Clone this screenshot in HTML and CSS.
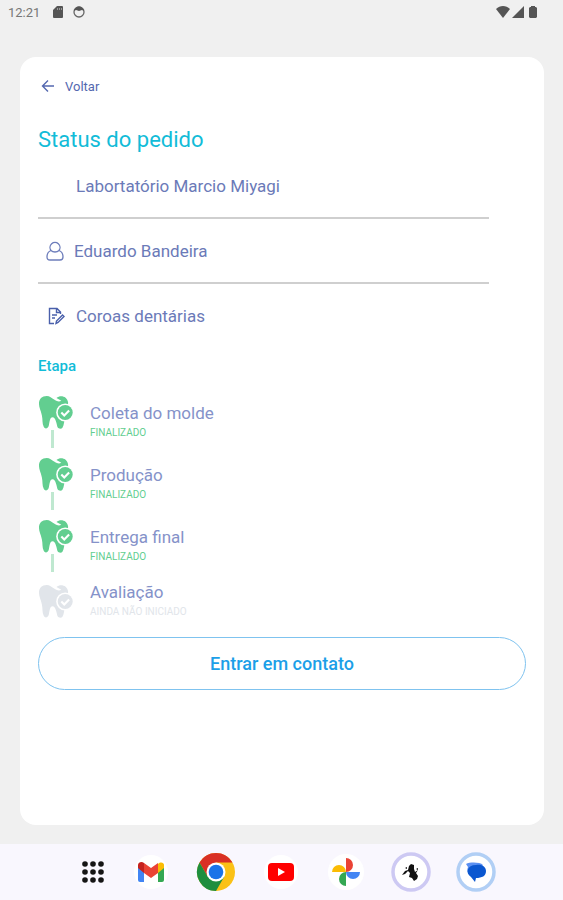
FILE: index.html
```html
<!DOCTYPE html>
<html lang="pt-BR">
  <head>
    <meta charset="UTF-8" />
    <meta name="viewport" content="width=device-width, initial-scale=1.0" />
    <title>Status do pedido</title>
    <link rel="stylesheet" href="styles.css">
  </head>

  <body>
    <!-- Shared tooth icon -->
    <svg class="sprite" aria-hidden="true">
      <symbol id="tooth" viewBox="0 0 36 36">
        <path fill="currentColor" d="M1 9C1 4 4 1 9 1c3 0 5 2 8 4 3 2 5 2 7 1l-5-3c4-3 11-2 12 5 0 4-2 8-3 13-1 5-1 10-3 13-1 1-4 1-5-1-1-4-2-10-5-10s-3 5-4 9c-1 3-4 3-5 1-2-4-1-8-2-12C3 16 1 13 1 9z" />
        <circle cx="28" cy="18" r="9.300" fill="#fff" />
        <circle cx="28" cy="18" r="7.700" fill="currentColor" />
        <path fill="none" stroke="#fff" stroke-width="2.200" d="M24 18l3 3 5-5" />
      </symbol>
    </svg>

    <!-- Status bar -->
    <header class="status-bar">
      <span class="clock">12:21</span>
      <svg class="sd-icon" viewBox="0 0 10 12"><path fill="#555" d="M4 0h5a1 1 0 0 1 1 1v10a1 1 0 0 1-1 1H1a1 1 0 0 1-1-1V4z" /><path stroke="#999" d="M4.500 2v2M6.500 2v2M8.500 2v2" /></svg>
      <svg class="round-icon" viewBox="0 0 12 12"><circle cx="6" cy="6" r="5" fill="none" stroke="#666" stroke-width="1.300" /><path fill="#555" d="M1 5c1-6 9-6 10 0L9 4 6 5 3 4z" /></svg>
      <div class="signals">
        <svg width="14" height="12" viewBox="0 0 14 12"><path fill="#555" d="M0 3c4-4 10-4 14 0L7 12z" /></svg>
        <svg width="12" height="12" viewBox="0 0 12 12"><path fill="#555" d="M12 0v12H0z" /></svg>
        <svg class="battery" width="8" height="12" viewBox="0 0 8 12"><path fill="#555" d="M2 0h4v1h1l1 1v9l-1 1H1l-1-1V2l1-1h1z" /></svg>
      </div>
    </header>

    <main class="screen">
      <section class="card">
        <a class="back" href="#">
          <svg width="14" height="14" viewBox="0 0 14 14" fill="none" stroke="#5468b0" stroke-width="1.400"><path d="M13 7H1.500M7 1.500L1.500 7 7 12.500" /></svg>
          Voltar
        </a>

        <h1 class="title">Status do pedido</h1>

        <div class="info">
          <div class="info-row">
            <span class="info-empty"></span>
            <span>Labortatório Marcio Miyagi</span>
          </div>
          <div class="info-row">
            <svg width="18" height="20" viewBox="0 0 18 20" fill="none" stroke="#6d7dbb" stroke-width="1.300"><path d="M5 9.500a5 5 0 1 1 8 0c3 1 4 3 4 6.500 0 2-1 3-3 3H4c-2 0-3-1-3-3 0-3.500 1-5.500 4-6.500zm0 0c2 2 6 2 8 0" /></svg>
            <span>Eduardo Bandeira</span>
          </div>
          <div class="info-row">
            <svg width="20" height="18" viewBox="0 0 20 18" fill="none" stroke="#4a60ab" stroke-width="1.400"><path d="M8 16.500H3.500v-15H11L14.500 5v2M10.500 1.500V5.500h4M6 8h5M6 11h3" /><path d="M10 16.500l.5-2.500 6-6 1.500 1.500-6 6z" /></svg>
            <span>Coroas dentárias</span>
          </div>
        </div>

        <h2 class="subtitle">Etapa</h2>

        <ol class="steps">
          <li class="step">
            <div class="step-mark"><svg class="tooth"><use href="#tooth" /></svg></div>
            <div class="step-text">
              <span class="step-name">Coleta do molde</span>
              <span class="step-status">FINALIZADO</span>
            </div>
          </li>
          <li class="step">
            <div class="step-mark"><svg class="tooth"><use href="#tooth" /></svg></div>
            <div class="step-text">
              <span class="step-name">Produção</span>
              <span class="step-status">FINALIZADO</span>
            </div>
          </li>
          <li class="step">
            <div class="step-mark"><svg class="tooth"><use href="#tooth" /></svg></div>
            <div class="step-text">
              <span class="step-name">Entrega final</span>
              <span class="step-status">FINALIZADO</span>
            </div>
          </li>
          <li class="step pending">
            <div class="step-mark"><svg class="tooth"><use href="#tooth" /></svg></div>
            <div class="step-text">
              <span class="step-name">Avaliação</span>
              <span class="step-status">AINDA NÃO INICIADO</span>
            </div>
          </li>
        </ol>

        <button class="contact" type="button">Entrar em contato</button>
      </section>
    </main>

    <!-- App dock -->
    <nav class="dock">
      <button class="app apps" type="button" aria-label="Apps">
        <svg width="24" height="24" viewBox="0 0 24 24" fill="#151515"><circle cx="4" cy="4" r="2.800" /><circle cx="12" cy="4" r="2.800" /><circle cx="20" cy="4" r="2.800" /><circle cx="4" cy="12" r="2.800" /><circle cx="12" cy="12" r="2.800" /><circle cx="20" cy="12" r="2.800" /><circle cx="4" cy="20" r="2.800" /><circle cx="12" cy="20" r="2.800" /><circle cx="20" cy="20" r="2.800" /></svg>
      </button>
      <button class="app" type="button" aria-label="Gmail">
        <svg viewBox="0 0 38 38"><circle cx="19" cy="19" r="17" fill="#fff" /><path fill="#4285f4" d="M6 13l6 4v12H8a2 2 0 0 1-2-2z" /><path fill="#34a853" d="M32 13l-6 4v12h4a2 2 0 0 0 2-2z" /><path fill="#fbbc04" d="M26 11c3-3 6-1 6 1v3l-6 5z" /><path fill="#c5221f" d="M6 15v-3c0-3 4-4 6-2v10z" /><path fill="#ea4335" d="M12 10l7 5 7-5v10l-7 5-7-5z" /></svg>
      </button>
      <button class="app" type="button" aria-label="Chrome">
        <svg viewBox="0 0 38 38"><circle cx="19" cy="19" r="19" fill="#fbc116" /><path fill="#d93025" d="M2.500 9.500A19 19 0 0 1 35.500 9.500H19L10.800 23.700z" /><path fill="#1e8e3e" d="M2.500 9.500A19 19 0 0 0 19 38l8.200-14.300H10.800z" /><circle cx="19" cy="19" r="9.500" fill="#fff" /><circle cx="19" cy="19" r="7.300" fill="#1a73e8" /></svg>
      </button>
      <button class="app" type="button" aria-label="YouTube">
        <svg viewBox="0 0 38 38"><circle cx="19" cy="19" r="17" fill="#fff" /><rect x="6" y="10" width="26" height="18" rx="4" fill="#f00" /><path fill="#fff" d="M16 15v8l7-4z" /></svg>
      </button>
      <button class="app" type="button" aria-label="Fotos">
        <svg viewBox="0 0 38 38"><circle cx="19" cy="19" r="18" fill="#fff" /><path fill="#ea4335" d="M19 5a7 7 0 0 1 0 14z" /><path fill="#4285f4" d="M33 19a7 7 0 0 1-14 0z" /><path fill="#34a853" d="M19 33a7 7 0 0 1 0-14z" /><path fill="#fbbc04" d="M5 19a7 7 0 0 1 14 0z" /></svg>
      </button>
      <button class="app" type="button" aria-label="App">
        <svg viewBox="0 0 38 38"><circle cx="19" cy="19" r="18" fill="#fff" stroke="#cdc9f3" stroke-width="3.500" /><path fill="#111" d="M17 13l2-2 3 1v4l1 3 3-2-2 3 2 3-1 3-3 2-2-3-3-1 1-4-2-2-3 3-3 1 3-4 3-1zM13 15l2-1v2zM24 16l2-1v2z" /></svg>
      </button>
      <button class="app" type="button" aria-label="Mensagens">
        <svg viewBox="0 0 38 38"><circle cx="19" cy="19" r="18" fill="#fff" stroke="#b1cff5" stroke-width="3.500" /><path fill="#5b90f2" d="M9 11c4-2 14-2 17 1l-9 11c-5 0-8-4-6-9z" /><path fill="#0b57d0" d="M19 12c6-1 10 2 10 6 0 5-4 7-10 7l-1 4-4-5c-6-4-4-12 5-12z" /></svg>
      </button>
    </nav>
  </body>
</html>
```
FILE: styles.css
```css
* {
  box-sizing: border-box;
}

body {
  margin: 0;
  min-height: 100vh;
  display: flex;
  flex-direction: column;
  background: #f0f0f0;
  font-family: Roboto, "Liberation Sans", sans-serif;
}

svg {
  display: block;
}

.sprite {
  display: none;
}

/* Status bar */
.status-bar {
  display: flex;
  align-items: center;
  height: 24px;
  padding: 0 26px 0 8px;
}

.clock {
  color: #777;
  font-size: 13px;
}

.sd-icon {
  width: 10px;
  height: 12px;
  margin-left: 13px;
}

.round-icon {
  width: 12px;
  height: 12px;
  margin-left: 10px;
}

.signals {
  display: flex;
  margin-left: auto;
  gap: 2px;
}

.battery {
  margin-left: 3px;
}

/* Order card */
.screen {
  flex: 1;
  display: flex;
  padding: 33px 19px 19px 20px;
}

.card {
  flex: 1;
  padding: 19px 18px;
  background: #fff;
  border-radius: 16px;
}

.back {
  display: flex;
  align-items: center;
  gap: 10px;
  height: 20px;
  padding-left: 3px;
  color: #5468b0;
  font-size: 13px;
  text-decoration: none;
}

.title {
  margin: 30px 0 0;
  color: #12bcd8;
  font-size: 22px;
  font-weight: 400;
  line-height: 28px;
}

.info {
  padding-right: 37px;
}

.info-row {
  display: flex;
  align-items: center;
  gap: 10px;
  height: 65px;
  padding-left: 8px;
  border-bottom: 2px solid #cfcfcf;
  color: #6b7ab8;
  font-size: 17px;
}

.info-row:last-child {
  height: 63px;
  border-bottom: 0;
}

.info-empty {
  width: 20px;
}

.subtitle {
  margin: 9px 0 0;
  color: #12bcd8;
  font-size: 15px;
  font-weight: 500;
  line-height: 20px;
}

/* Steps */
.steps {
  margin: 19px 0 0;
  padding: 0;
  list-style: none;
  display: flex;
  flex-direction: column;
  gap: 9px;
}

.step {
  display: flex;
  align-items: center;
  gap: 17px;
  color: #62ce90;
}

.tooth {
  width: 35px;
  height: 35px;
}

.step-mark::after {
  content: "";
  display: block;
  width: 3px;
  height: 18px;
  margin-left: 13px;
  background: #bfe8d0;
}

.step-text {
  display: flex;
  flex-direction: column;
}

.step-name {
  color: #8592c9;
  font-size: 17px;
  line-height: 22px;
}

.step-status {
  font-size: 10px;
  line-height: 18px;
}

.pending {
  color: #e1e5ea;
}

.pending .step-mark::after {
  display: none;
}

.contact {
  display: block;
  width: 100%;
  height: 53px;
  margin-top: 16px;
  border: 1px solid #7fc3ef;
  border-radius: 27px;
  background: #fff;
  color: #1c9fe8;
  font-family: inherit;
  font-size: 18px;
  font-weight: 500;
}

/* Dock */
.dock {
  display: flex;
  align-items: center;
  justify-content: center;
  gap: 27px;
  height: 56px;
  padding-left: 13px;
  background: #f9f7fe;
}

.app {
  width: 38px;
  padding: 0;
  border: 0;
  background: none;
}

.app svg {
  width: 100%;
  overflow: visible;
}

.apps {
  width: 24px;
}
```
